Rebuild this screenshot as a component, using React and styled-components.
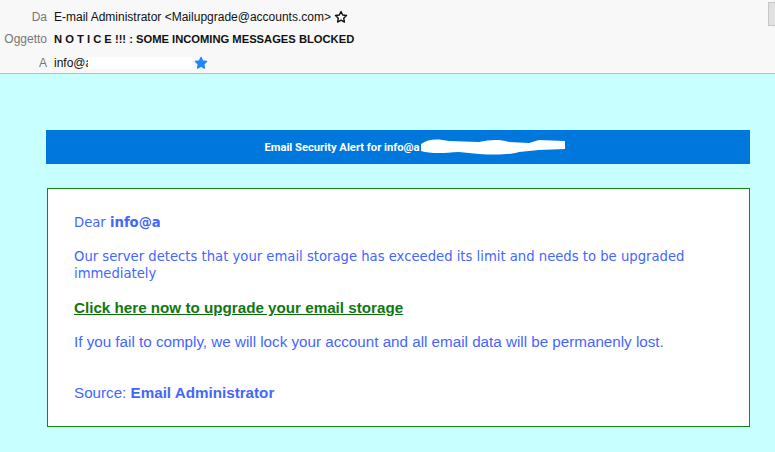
import React from 'react'
import styled, { createGlobalStyle } from 'styled-components'

const GlobalStyle = createGlobalStyle`
    html, body {
        margin: 0;
        padding: 0;
        background: #c8ffff;
    }
    body {
        font-family: "Liberation Sans", Arial, sans-serif;
        overflow: hidden;
    }
`

const Page = styled.div`
    width: 775px;
    height: 452px;
    display: flex;
    flex-direction: column;
`

const Header = styled.header`
    position: relative;
    height: 74px;
    background: #f8f8f8;
    border-bottom: 1px solid #9fc7d1;
    box-sizing: border-box;
    padding-top: 8px;
    display: flex;
    flex-direction: column;
    gap: 4px;
`

const HeaderRow = styled.div`
    display: flex;
    align-items: center;
    height: 18px;
    font-size: 12px;
    color: #111;
    margin-top: ${(p) => p.$offset || 0}px;
`

const Label = styled.span`
    width: 47px;
    text-align: right;
    color: #777;
    margin-right: 7px;
    flex-shrink: 0;
`

const Value = styled.span`
    font-weight: ${(p) => (p.$bold ? 700 : 400)};
    font-size: ${(p) => (p.$bold ? 11.2 : 12)}px;
    white-space: nowrap;
`

const Redacted = styled.span`
    display: inline-block;
    width: 104px;
    height: 12px;
    background: #fff;
    margin-left: -4px;
`

const StarIcon = styled.svg`
    width: 14px;
    height: 14px;
    margin-left: ${(p) => p.$gap || 3}px;
    flex-shrink: 0;
`

const CornerButton = styled.div`
    position: absolute;
    top: 2px;
    right: -6px;
    width: 11px;
    height: 22px;
    background: #e1e1e1;
    border: 1px solid #c6c6c6;
`

const Body = styled.main`
    flex: 1;
    padding: 56px 25px 0 46px;
    display: flex;
    flex-direction: column;
`

const AlertBar = styled.div`
    height: 34px;
    background: #0077dd;
    display: flex;
    align-items: center;
    justify-content: center;
    color: #fff;
    font-family: Roboto, "Liberation Sans", Arial, sans-serif;
    font-weight: 700;
    font-size: 11.2px;
    padding-left: 37px;
`

const Scribble = styled.svg`
    width: 152px;
    height: 22px;
    margin-left: -3px;
`

const Card = styled.section`
    margin: 24px 0 0 1px;
    height: 239px;
    box-sizing: border-box;
    background: #fff;
    border: 1px solid #138813;
    padding: 25px 26px 0 26px;
    color: #4466ff;
`

const Para = styled.p`
    margin: 0 0 ${(p) => p.$after || 17}px 0;
    font-family: ${(p) =>
        p.$narrow
            ? '"Liberation Sans", Arial, sans-serif'
            : '"DejaVu Sans", Verdana, sans-serif'};
    font-size: ${(p) => (p.$narrow ? 15.2 : 13.2)}px;
    line-height: 17px;
`

const Strong = styled.b`
    font-weight: 700;
`

const UpgradeLink = styled.a`
    display: block;
    color: #117711;
    font-family: "Liberation Sans", Arial, sans-serif;
    font-weight: 700;
    font-size: 15.2px;
    line-height: 17px;
    text-decoration: underline;
    text-decoration-color: #0d6b0d;
    margin-bottom: 17px;
`

const Star = ({ filled, gap }) => (
    <StarIcon viewBox="0 0 24 24" $gap={gap}>
        <path
            d="M12 2.5l2.9 6.1 6.6.8-4.9 4.6 1.3 6.6L12 17.3l-5.9 3.3 1.3-6.6-4.9-4.6 6.6-.8z"
            fill={filled ? '#1e88ff' : 'none'}
            stroke={filled ? '#1e88ff' : '#111'}
            strokeWidth="2.4"
            strokeLinejoin="round"
        />
    </StarIcon>
)

export default function App() {
    return (
        <Page>
            <GlobalStyle />
            <Header>
                <HeaderRow>
                    <Label>Da</Label>
                    <Value>E-mail Administrator &lt;Mailupgrade@accounts.com&gt;</Value>
                    <Star />
                </HeaderRow>
                <HeaderRow>
                    <Label>Oggetto</Label>
                    <Value $bold>N O T I C E !!! : SOME INCOMING MESSAGES BLOCKED</Value>
                </HeaderRow>
                <HeaderRow $offset={2}>
                    <Label>A</Label>
                    <Value>info@a</Value>
                    <Redacted />
                    <Star filled gap={2} />
                </HeaderRow>
                <CornerButton />
            </Header>
            <Body>
                <AlertBar>
                    Email Security Alert for info@a
                    <Scribble viewBox="0 0 148 22">
                        <path
                            d="M2 8 C10 2 20 3 30 5 L60 6 C70 4 80 3 90 6 L110 7 L120 4 L146 5 L146 13 L120 14 L100 16 C90 19 75 19 60 18 L40 16 C25 17 12 18 2 15 Z"
                            fill="#fff"
                        />
                    </Scribble>
                </AlertBar>
                <Card>
                    <Para>
                        Dear <Strong>info@a</Strong>
                    </Para>
                    <Para>
                        Our server detects that your email storage has exceeded its limit and needs to be upgraded
                        immediately
                    </Para>
                    <UpgradeLink href="#">Click here now to upgrade your email storage</UpgradeLink>
                    <Para $narrow $after={34}>
                        If you fail to comply, we will lock your account and all email data will be permanenly lost.
                    </Para>
                    <Para $narrow>
                        Source: <Strong>Email Administrator</Strong>
                    </Para>
                </Card>
            </Body>
        </Page>
    )
}
